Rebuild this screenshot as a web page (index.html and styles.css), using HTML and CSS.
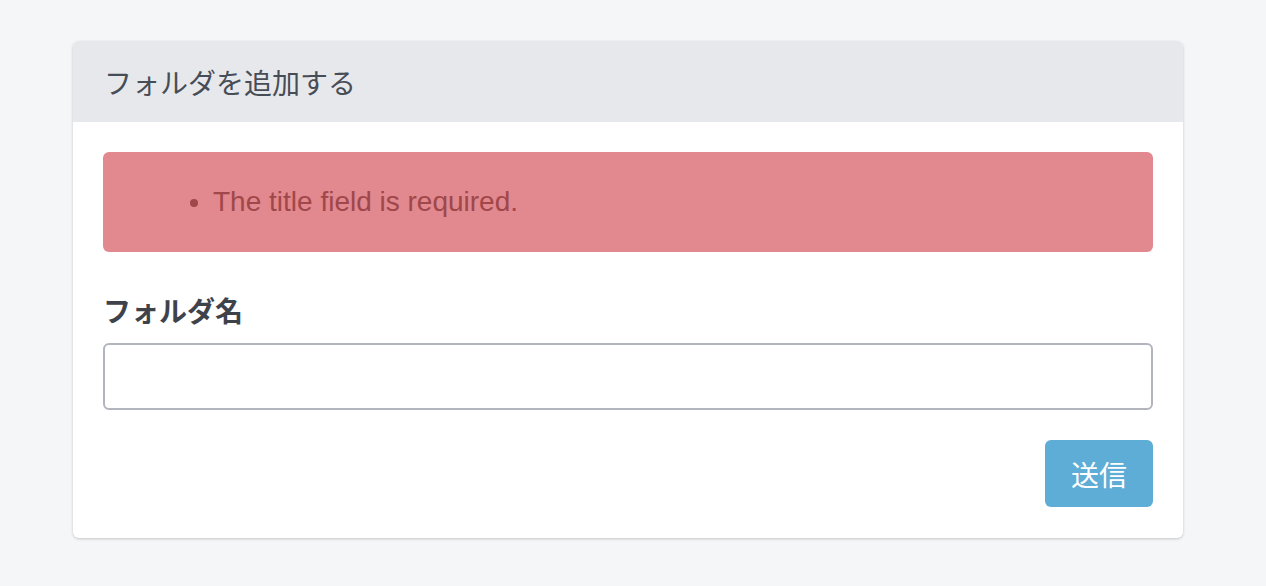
FILE: index.html
```html
<!DOCTYPE html>
<html lang="ja">
<head>
<meta charset="utf-8">
<title>フォルダを追加する</title>
<link rel="stylesheet" href="styles.css">
</head>
<body>
<main class="page">
  <section class="card">
    <header class="card-header">フォルダを追加する</header>
    <div class="card-body">
      <div class="alert">
        <ul class="alert-list">
          <li>The title field is required.</li>
        </ul>
      </div>
      <form class="form">
        <div class="form-group">
          <label class="label" for="title">フォルダ名</label>
          <input class="input" id="title" type="text">
        </div>
        <div class="actions">
          <button class="btn" type="button">送信</button>
        </div>
      </form>
    </div>
  </section>
</main>
</body>
</html>
```

FILE: styles.css
```css
* { box-sizing: border-box; }
html, body {
  margin: 0;
  padding: 0;
  background: #f5f6f8;
  font-family: "Liberation Sans", "Noto Sans CJK JP", sans-serif;
  color: #454a52;
}
.page {
  padding: 41px 83px 48px 73px;
}
.card {
  width: 1110px;
  background: #ffffff;
  border-radius: 6px;
  box-shadow: 0 1px 3px rgba(0, 0, 0, 0.2);
  overflow: hidden;
}
.card-header {
  height: 81px;
  display: flex;
  align-items: center;
  padding-left: 31px;
  background: #e7e8eb;
  font-family: "Noto Sans CJK JP", sans-serif;
  font-size: 28px;
  color: #474d56;
}
.card-body {
  padding: 30px 30px 31px 30px;
  display: flex;
  flex-direction: column;
}
.alert {
  height: 100px;
  background: #e2888f;
  border-radius: 6px;
  display: flex;
  align-items: center;
  padding-left: 110px;
  color: #a0474a;
  font-size: 28px;
}
.alert-list {
  margin: 0;
  padding: 0;
}
.alert-list li {
  line-height: 1.2;
}
.form {
  display: flex;
  flex-direction: column;
  margin-top: 37px;
}
.form-group {
  display: flex;
  flex-direction: column;
  gap: 12px;
}
.label {
  font-family: "Noto Sans CJK JP", sans-serif;
  font-weight: 700;
  font-size: 28px;
  line-height: 42px;
  color: #3e434b;
}
.input {
  height: 67px;
  border: 2px solid #b2b5be;
  border-radius: 6px;
  background: #fff;
  font-size: 26px;
  padding: 0 16px;
}
.actions {
  display: flex;
  justify-content: flex-end;
  margin-top: 30px;
}
.btn {
  width: 108px;
  height: 67px;
  border: none;
  border-radius: 6px;
  background: #5dadd6;
  color: #ffffff;
  font-family: "Noto Sans CJK JP", sans-serif;
  font-size: 28px;
  padding: 0;
}
```
